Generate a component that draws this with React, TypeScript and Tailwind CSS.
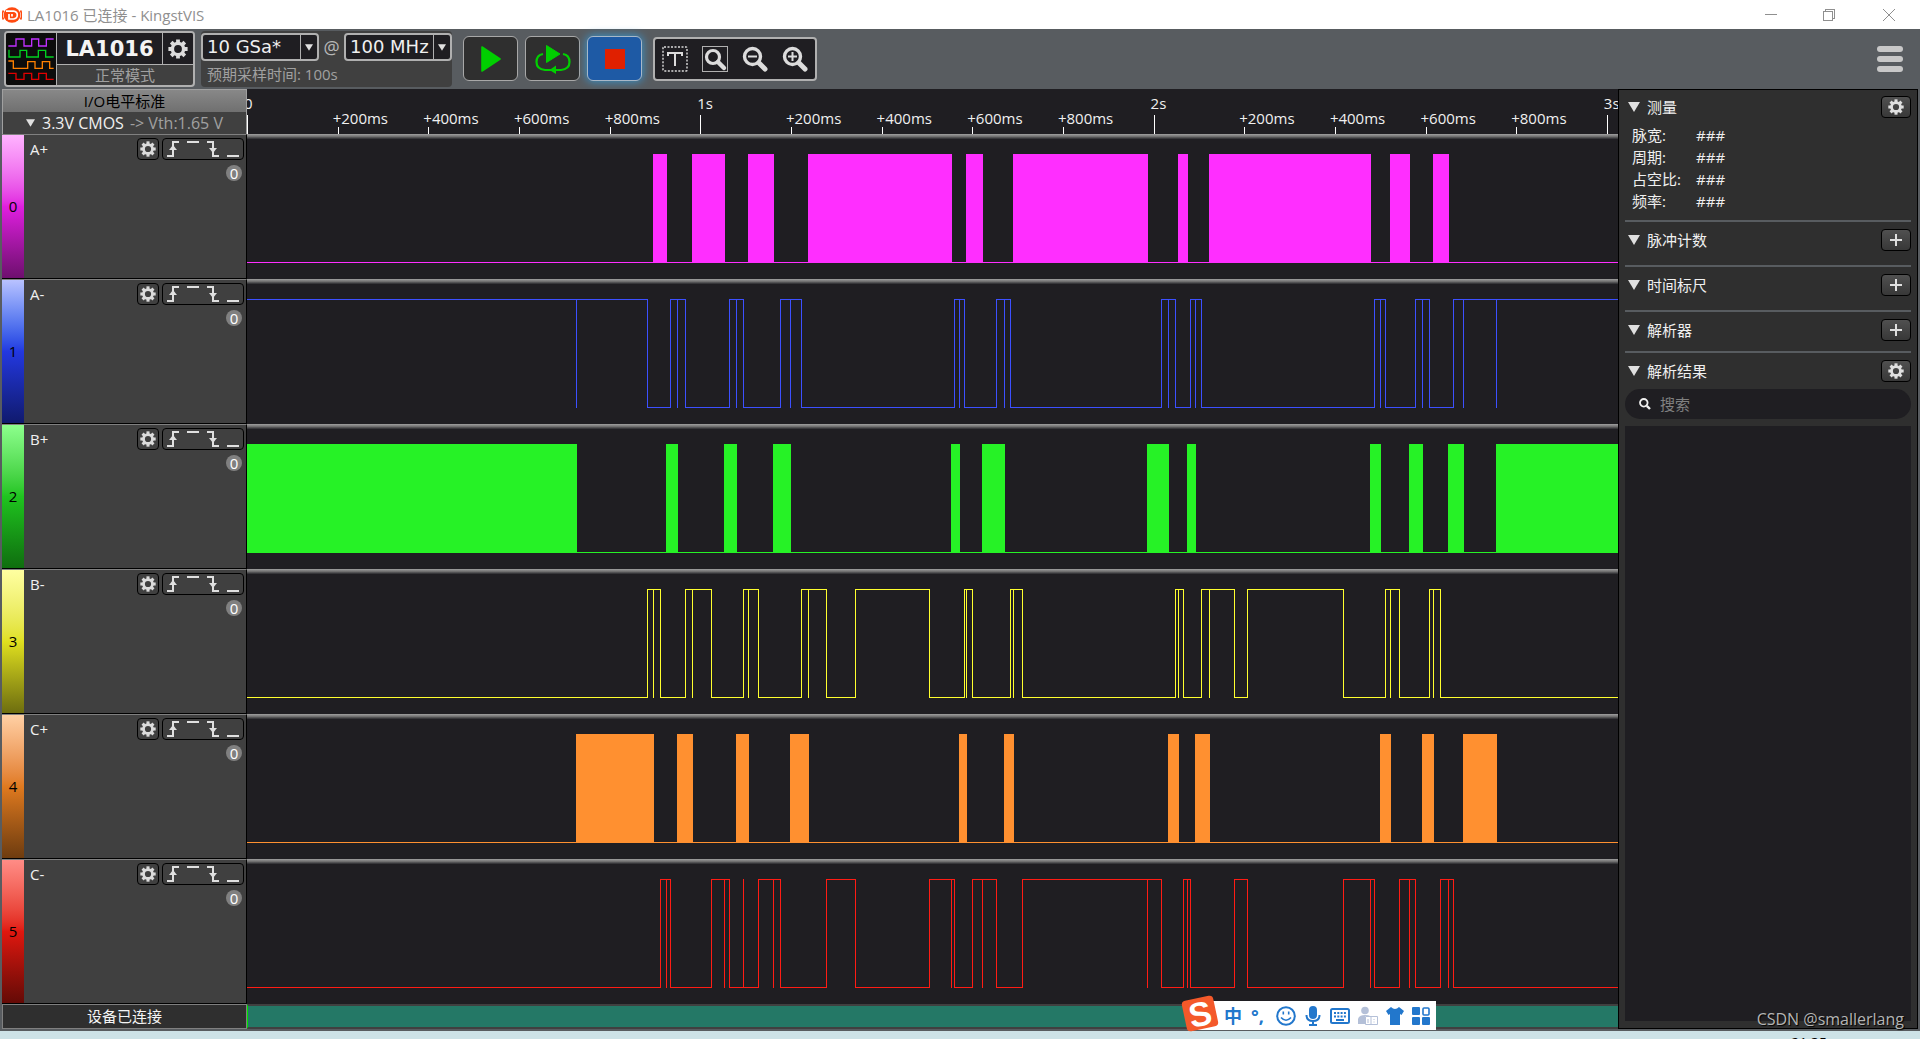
import React, { useState } from "react";

interface Channel {
  id: number;
  name: string;
  color: string;
  strip: string;
  // filled bursts, [start, end] in timeline units
  bursts?: [number, number][];
  // level changes and the narrow spikes between them
  startHigh?: boolean;
  edges?: number[];
  spikes?: number[];
}

const TIMELINE_WIDTH = 1371;
const HIGH = 15;
const LOW = 123;

const channels: Channel[] = [
  {
    id: 0,
    name: "A+",
    color: "#ff2eff",
    strip: "from-[#ffb3ff] via-[#e01fe0] to-[#6e0f6e]",
    bursts: [[406, 420], [445, 478], [501, 527], [561, 705], [719, 736], [766, 901], [931, 941], [962, 1124], [1143, 1163], [1186, 1202]],
  },
  {
    id: 1,
    name: "A-",
    color: "#3c50ff",
    strip: "from-[#b9c2ff] via-[#2338e0] to-[#101a6e]",
    startHigh: true,
    edges: [400, 423, 438, 482, 496, 533, 554, 707, 717, 749, 763, 914, 928, 943, 954, 1127, 1138, 1168, 1182, 1206],
    spikes: [329, 430, 489, 543, 712, 757, 921, 948, 1133, 1175, 1216, 1249],
  },
  {
    id: 2,
    name: "B+",
    color: "#26f226",
    strip: "from-[#8cff8c] via-[#1fc41f] to-[#0f6e0f]",
    bursts: [[0, 330], [419, 431], [477, 490], [526, 544], [704, 713], [735, 758], [900, 922], [940, 949], [1123, 1134], [1162, 1176], [1201, 1217], [1249, 1371]],
  },
  {
    id: 3,
    name: "B-",
    color: "#ffff2e",
    strip: "from-[#ffffa0] via-[#e0e01f] to-[#6e6e0f]",
    edges: [400, 413, 438, 464, 496, 511, 554, 579, 608, 682, 717, 725, 763, 775, 928, 936, 954, 987, 1000, 1096, 1138, 1152, 1182, 1193],
    spikes: [406, 445, 501, 561, 719, 766, 931, 962, 1143, 1186],
  },
  {
    id: 4,
    name: "C+",
    color: "#ff9030",
    strip: "from-[#ffd0a4] via-[#e07a1f] to-[#6e3c0f]",
    bursts: [[329, 407], [430, 446], [489, 502], [543, 562], [712, 720], [757, 767], [921, 932], [948, 963], [1133, 1144], [1175, 1187], [1216, 1250]],
  },
  {
    id: 5,
    name: "C-",
    color: "#ff1c14",
    strip: "from-[#ff8c86] via-[#e0170f] to-[#640a06]",
    edges: [413, 423, 464, 482, 511, 533, 579, 608, 682, 707, 725, 749, 775, 914, 936, 943, 987, 1000, 1096, 1127, 1152, 1168, 1193, 1206],
    spikes: [419, 477, 496, 526, 704, 735, 900, 940, 1123, 1162, 1201],
  },
];

const ticks = Array.from({ length: 16 }, (_, i) => ({
  major: i % 5 === 0,
  label: i % 5 === 0 ? (i === 0 ? "0" : `${i / 5}s`) : `+${(i % 5) * 200}ms`,
}));

const measurements = ["脉宽:", "周期:", "占空比:", "频率:"];

const GearIcon = ({ className }: { className: string }) => (
  <svg viewBox="0 0 20 20" className={className} fill="none" stroke="currentColor" aria-hidden="true">
    <circle cx="10" cy="10" r="5.6" strokeWidth="3.4" />
    {[0, 45, 90, 135, 180, 225, 270, 315].map((a) => (
      <path key={a} d="M10 4.2V0.4" strokeWidth="3.8" transform={`rotate(${a} 10 10)`} />
    ))}
  </svg>
);

const DownTriangle = ({ className }: { className: string }) => (
  <svg viewBox="0 0 12 10" className={className} fill="#e0e0e0" aria-hidden="true">
    <path d="M0 0H12L6 10Z" />
  </svg>
);

const Magnifier = ({ children }: { children?: React.ReactNode }) => (
  <g fill="none" stroke="#dcdcdc">
    <circle cx="10.5" cy="10.5" r="8" strokeWidth="3.4" />
    <path d="M17 17L23 23" strokeWidth="5" strokeLinecap="round" />
    {children}
  </g>
);

function TitleBar() {
  return (
    <header className="flex h-[29px] shrink-0 items-center bg-white pl-0.5 text-[#8f8f8f]">
      <svg viewBox="0 0 20 16" className="h-4 w-5" aria-hidden="true">
        <ellipse cx="10" cy="8" rx="8.4" ry="7.8" fill="#ff4a10" />
        <path d="M1.5 3.5Q-1 8 1.5 12.5M18.5 3.5Q21 8 18.5 12.5" stroke="#ff4a10" strokeWidth="1.6" fill="none" />
        <path d="M4 4.2H11.5Q15.3 4.6 15.3 8T11.5 12H7V7M10 7V9.600" stroke="#fff" strokeWidth="1.7" fill="none" />
      </svg>
      <h1 className="ml-[5px] text-[15px] leading-5">LA1016 已连接 - KingstVIS</h1>
      <div className="ml-auto flex h-full">
        <button aria-label="最小化" className="flex w-[58px] items-center justify-center">
          <svg viewBox="0 0 12 12" className="h-3 w-3" stroke="#8f8f8f" shapeRendering="crispEdges">
            <path d="M0 5.5H12" />
          </svg>
        </button>
        <button aria-label="还原" className="flex w-[58px] items-center justify-center">
          <svg viewBox="0 0 12 12" className="h-3 w-3" fill="none" stroke="#8f8f8f" shapeRendering="crispEdges">
            <path d="M0.5 2.5H9.5V11.5H0.5ZM2.5 2.5V0.5H11.5V9.5H9.5" />
          </svg>
        </button>
        <button aria-label="关闭" className="flex w-[62px] items-center justify-center">
          <svg viewBox="0 0 12 12" className="h-3 w-3" stroke="#8f8f8f">
            <path d="M0 0L12 12M12 0L0 12" />
          </svg>
        </button>
      </div>
    </header>
  );
}

function ToolbarSelect({ label, value, className }: { label: string; value: string; className: string }) {
  return (
    <div className={`relative h-7 rounded-sm border-2 border-[#b0b0b0] bg-[#1f1e22] ${className}`}>
      <select
        aria-label={label}
        defaultValue={value}
        className="block h-full w-full appearance-none pl-1 font-['DejaVu_Sans'] text-[18px] leading-6 text-[#f0f0f0] outline-none"
      >
        <option>{value}</option>
      </select>
      <span className="pointer-events-none absolute inset-y-0 right-0 flex w-[17px] items-center justify-center border-l border-[#b0b0b0]">
        <DownTriangle className="h-[7px] w-2" />
      </span>
    </div>
  );
}

function Toolbar() {
  return (
    <div className="flex h-[60px] shrink-0 items-center pr-[17px] pl-1">
      <div className="flex h-14 w-[191px] overflow-hidden rounded-sm border-2 border-[#b0b0b0] bg-[#404040]">
        <svg viewBox="18 100 150 156" className="h-full w-[50px] bg-[#0c0c0c]" fill="none" strokeWidth="4" aria-hidden="true">
          <path stroke="#c030ff" d="M25 139H48V118H72V139H95V118H116V139H139V118H161" />
          <path stroke="#00d020" d="M27 150V172H60V152H80V172H115V152H137V172H161" />
          <path stroke="#ff8000" d="M25 184H40V206H83V186H105V206H127V186H149V206H161" />
          <path stroke="#e00000" d="M25 221H48V239H72V221H95V239H116V221H139V239H161" />
        </svg>
        <div className="flex flex-1 flex-col border-l border-[#b0b0b0]">
          <div className="flex h-[33px] border-b border-[#b0b0b0] bg-[#1f1e22]">
            <strong className="flex flex-1 items-center justify-center font-['DejaVu_Sans'] text-[21px] leading-6 text-[#f4f4f4]">
              LA1016
            </strong>
            <button aria-label="设备设置" className="flex w-[31px] items-center justify-center border-l border-[#b0b0b0] text-[#dcdcdc]">
              <GearIcon className="h-5 w-5" />
            </button>
          </div>
          <span className="text-center text-[15px] leading-5 text-[#a0a0a0]">正常模式</span>
        </div>
      </div>

      <div className="ml-1.5 h-14 w-[251px] rounded-sm bg-[#404040] pt-0.5">
        <div className="flex items-center justify-between">
          <ToolbarSelect label="采样深度" value="10 GSa*" className="w-[118px]" />
          <span className="text-[18px] leading-6 text-[#b8b8b8]">@</span>
          <ToolbarSelect label="采样率" value="100 MHz" className="w-[108px]" />
        </div>
        <p className="pt-[3px] pl-1.5 text-[15px] leading-5 text-[#a0a0a0]">预期采样时间: 100s</p>
      </div>

      <div className="mb-px ml-[11px] flex gap-[7px]">
        <button aria-label="开始采样" className="flex h-[45px] w-[55px] items-center justify-center rounded-md border border-[#a8a8a8] bg-[#2f2f2f]">
          <svg viewBox="0 0 22 26" className="ml-px h-[26px] w-[22px]">
            <path d="M2 1L20 13L2 25Z" fill="#00d000" stroke="#00d000" strokeWidth="1.6" strokeLinejoin="round" />
          </svg>
        </button>
        <button aria-label="循环采样" className="flex h-[45px] w-[55px] items-center justify-center rounded-md border border-[#a8a8a8] bg-[#2f2f2f]">
          <svg viewBox="0 0 36 30" className="h-[30px] w-9" fill="none">
            <path d="M8 10Q1.500 11 1.500 18T10 26H26Q34.500 25 34.500 18T28 10" stroke="#00d000" strokeWidth="2.2" />
            <path d="M11.5 1.5L25 10L11.5 18.5Z" fill="#00d000" stroke="#00d000" strokeLinejoin="round" />
            <path d="M14.500 26L21 21.500V30Z" fill="#00d000" />
          </svg>
        </button>
        <button aria-label="停止" className="flex h-[45px] w-[55px] items-center justify-center rounded-md border border-[#a8b8c8] bg-[#1e5aa5] shadow-[0_0_8px_1px_#3a8fc4]">
          <svg viewBox="0 0 20 20" className="h-5 w-5">
            <rect width="20" height="20" fill="#e02000" />
          </svg>
        </button>
      </div>

      <div className="ml-[11px] flex h-11 w-[164px] items-center justify-around rounded-sm border-2 border-[#b0b0b0] bg-[#1f1e22]">
        <button aria-label="时间标签">
          <svg viewBox="0 0 26 26" className="h-[26px] w-[26px]" fill="none" stroke="#dcdcdc">
            <rect x="1" y="1" width="24" height="24" rx="1" strokeWidth="1.4" strokeDasharray="2 1.500" />
            <path d="M6 7H20M13 7V20M6 6V10M20 6V10" strokeWidth="2" />
          </svg>
        </button>
        <button aria-label="适合窗口">
          <svg viewBox="0 0 26 26" className="h-[26px] w-[26px]" fill="none">
            <rect x="0.500" y="0.500" width="25" height="25" stroke="#b0b0b0" />
            <circle cx="11" cy="11" r="6.500" stroke="#dcdcdc" strokeWidth="3.200" />
            <path d="M16 16L22 22" stroke="#dcdcdc" strokeWidth="4.500" strokeLinecap="round" />
          </svg>
        </button>
        <button aria-label="缩小">
          <svg viewBox="0 0 26 26" className="h-[26px] w-[26px]">
            <Magnifier>
              <path d="M6 10.500H15" strokeWidth="2" />
            </Magnifier>
          </svg>
        </button>
        <button aria-label="放大">
          <svg viewBox="0 0 26 26" className="h-[26px] w-[26px]">
            <Magnifier>
              <path d="M6 10.500H15M10.500 6V15" strokeWidth="2" />
            </Magnifier>
          </svg>
        </button>
      </div>

      <button aria-label="菜单" className="ml-auto">
        <svg viewBox="0 0 26 26" className="h-[26px] w-[26px]" fill="#c8c8c8">
          <rect width="26" height="6" rx="3" />
          <rect y="10" width="26" height="6" rx="3" />
          <rect y="20" width="26" height="6" rx="3" />
        </svg>
      </button>
    </div>
  );
}

function Ruler() {
  return (
    <div className="flex min-w-0 flex-1 overflow-hidden">
      {ticks.map((tick, i) => (
        <div key={i} className="flex w-[6.613%] shrink-0 flex-col justify-end text-[15px] leading-4 whitespace-nowrap text-[#f0f0f0]">
          {tick.major ? (
            <>
              <span className="-ml-[3px] pb-1">{tick.label}</span>
              <span className="h-[19px] w-px bg-white" />
            </>
          ) : (
            <>
              <span className="-ml-[5px] pb-px">{tick.label}</span>
              <span className="h-[7px] w-px bg-white" />
            </>
          )}
        </div>
      ))}
    </div>
  );
}

const triggers = [
  { label: "上升沿", d: "M0 15H6V1H12", arrow: "M2 9L6 4L10 9Z" },
  { label: "高电平", d: "M0 1H12", arrow: "" },
  { label: "下降沿", d: "M0 1H6V15H12", arrow: "M2 7L6 12L10 7Z" },
  { label: "低电平", d: "M0 15H12", arrow: "" },
];

function ChannelHeader({ channel }: { channel: Channel }) {
  return (
    <div className="flex w-[245px] shrink-0 border-t border-r border-b border-t-[#808080] border-r-black border-b-black bg-[#404040]">
      <div className={`flex w-[22px] items-center justify-center bg-linear-to-b pb-0.5 text-[15px] leading-5 text-black ${channel.strip}`}>
        {channel.id}
      </div>
      <div className="flex flex-1 flex-col items-end pt-[3px] pr-0.5 pl-1.5">
        <div className="flex w-full gap-[3px]">
          <span className="flex-1 text-[15px] leading-[22px] text-[#f0f0f0]">{channel.name}</span>
          <button
            aria-label={`${channel.name} 设置`}
            className="flex h-[22px] w-[22px] items-center justify-center rounded-sm border border-black text-[#dcdcdc]"
          >
            <GearIcon className="h-4 w-4" />
          </button>
          <div className="flex h-[22px] w-[82px] rounded-sm border border-black">
            {triggers.map((t) => (
              <button key={t.label} aria-label={`${channel.name} ${t.label}`} className="flex w-5 items-center justify-center">
                <svg viewBox="0 0 12 16" className="h-4 w-3" fill="none" stroke="#e0e0e0" strokeWidth="2">
                  <path d={t.d} />
                  {t.arrow && <path d={t.arrow} fill="#e0e0e0" stroke="none" />}
                </svg>
              </button>
            ))}
          </div>
        </div>
        <span className="mt-[5px] mr-0.5 flex h-4 w-4 items-center justify-center rounded-full bg-[#808080] text-[15px] leading-4 text-white">
          0
        </span>
      </div>
    </div>
  );
}

// Every line is a one unit thick box so that it stays sharp when stretched
const hLine = (x1: number, x2: number, y: number) => `M${x1} ${y}H${x2}V${y + 1}H${x1}Z`;
const vLine = (x: number) => `M${x} ${HIGH}H${x + 1}V${LOW + 1}H${x}Z`;

function wavePath(channel: Channel) {
  let level = channel.startHigh ? HIGH : LOW;
  let last = 0;
  let d = "";
  (channel.edges ?? []).forEach((x) => {
    d += hLine(last, x + 1, level) + vLine(x);
    level = level === HIGH ? LOW : HIGH;
    last = x;
  });
  d += hLine(last, TIMELINE_WIDTH, level);
  (channel.spikes ?? []).forEach((x) => {
    d += vLine(x);
  });
  return d;
}

function Waveform({ channel }: { channel: Channel }) {
  return (
    <div className="flex min-w-0 flex-1 flex-col">
      <div className="h-[5px] shrink-0 bg-linear-to-b from-[#a0a0a0] via-[#707070] to-[#2a2a2e]" />
      <svg
        viewBox={`0 0 ${TIMELINE_WIDTH} 140`}
        preserveAspectRatio="none"
        shapeRendering="crispEdges"
        className="block min-h-0 w-full flex-1"
        fill={channel.color}
        role="img"
        aria-label={channel.name}
      >
        {channel.bursts?.map(([start, end]) => (
          <rect key={start} x={start} y={HIGH} width={end - start} height={LOW - HIGH + 1} />
        ))}
        <path d={wavePath(channel)} />
      </svg>
    </div>
  );
}

function InputMethodBar() {
  return (
    <div className="absolute -top-[5px] right-[182px] flex h-[29px] items-center bg-white pl-9 text-[#2277cc]">
      <span className="absolute -top-[3px] -left-1 flex h-[31px] w-8 -rotate-12 items-center justify-center rounded-sm bg-[#f4592a] font-['Liberation_Sans'] text-[34px] leading-8 font-bold text-white">
        S
      </span>
      <span className="w-[27px] text-lg leading-6 font-bold">中</span>
      <span className="w-[25px] text-lg leading-6 font-bold">°,</span>
      <svg viewBox="0 0 20 20" className="mr-[9px] h-5 w-5" fill="none" stroke="currentColor" strokeWidth="2">
        <circle cx="10" cy="10" r="8.800" />
        <path d="M7.300 5.500V8.500M12.700 5.500V8.500M5 11.500Q10 17 15 11.500" strokeWidth="1.600" />
      </svg>
      <svg viewBox="0 0 16 20" className="mr-[9px] h-5 w-4" fill="none" stroke="currentColor" strokeWidth="2">
        <rect x="5" y="1" width="6" height="11" rx="3" fill="currentColor" />
        <path d="M1.500 9Q1.500 15 8 15T14.500 9M8 15V19M4 19H12" />
      </svg>
      <svg viewBox="0 0 20 16" className="mr-2 h-4 w-5" fill="none" stroke="currentColor" strokeWidth="2">
        <rect x="1" y="1" width="18" height="14" rx="1.500" />
        <path d="M4 5H16M4 8.500H16" strokeDasharray="2 1.300" />
        <path d="M6 12H14" />
      </svg>
      <svg viewBox="0 0 20 20" className="mr-2 h-5 w-5" fill="#b4c0d8">
        <circle cx="7" cy="4.500" r="3.800" />
        <path d="M0 18V13Q1 9 7 9Q11 9 12 10H7V18Z" />
        <path d="M7.500 10.500H19.500V18.500H7.500ZM10 13V17M13 10.500V18M16 13V14M16 15.500V16.500" fill="none" stroke="#b4c0d8" />
      </svg>
      <svg viewBox="0 0 18 18" className="mr-2 h-[18px] w-[18px]" fill="currentColor">
        <path d="M5 0Q9 4 13 0L18 4L15.500 8L14 7V18H4V7L2.500 8L0 4Z" />
      </svg>
      <svg viewBox="0 0 18 18" className="mr-1.5 h-[18px] w-[18px]" fill="currentColor">
        <rect width="8" height="8" rx="1" />
        <rect x="11" y="1" width="6" height="7" rx="1" fill="none" stroke="currentColor" strokeWidth="1.600" />
        <rect y="10" width="8" height="8" rx="1" />
        <rect x="10" y="10" width="8" height="8" rx="1" />
      </svg>
    </div>
  );
}

function StatusBar() {
  return (
    <footer className="flex h-[25px] shrink-0">
      <div className="flex w-[245px] items-center justify-center border border-[#808080] bg-[#2f2f2f] pb-0.5 text-[15px] leading-5 text-[#f4f4f4]">
        设备已连接
      </div>
      <div className="relative flex-1 border-y-2 border-l border-y-[#404040] border-l-[#00e000] bg-[#247866]">
        <InputMethodBar />
      </div>
    </footer>
  );
}

function PanelSection({
  title,
  action,
  className,
  children,
}: {
  title: string;
  action: "gear" | "add";
  className: string;
  children?: React.ReactNode;
}) {
  const [open, setOpen] = useState(true);

  return (
    <section className={className}>
      <div className="flex items-center justify-between">
        <button
          aria-expanded={open}
          onClick={() => setOpen(!open)}
          className="flex items-center gap-[7px] pl-[3px] text-[15px] leading-[22px] text-[#f0f0f0]"
        >
          <DownTriangle className="h-2.5 w-3" />
          {title}
        </button>
        <button
          aria-label={`${title} ${action === "gear" ? "设置" : "添加"}`}
          className="flex h-[22px] w-[30px] items-center justify-center rounded-sm border border-black bg-linear-to-b from-[#505050] to-[#383838] text-[#e0e0e0]"
        >
          {action === "gear" ? (
            <GearIcon className="h-4 w-4" />
          ) : (
            <svg viewBox="0 0 14 14" className="h-3.5 w-3.5" stroke="currentColor" strokeWidth="2">
              <path d="M1 7H13M7 1V13" />
            </svg>
          )}
        </button>
      </div>
      {open && children}
    </section>
  );
}

function SidePanel() {
  return (
    <aside className="relative flex w-[300px] shrink-0 flex-col border border-black bg-[#2f2f2f] px-1.5 pt-1.5 pb-[7px]">
      <PanelSection title="测量" action="gear" className="h-[124px]">
        <dl className="grid grid-cols-[64px_1fr] pt-1.5 pl-[7px] text-[15px] leading-[22px] text-[#f0f0f0]">
          {measurements.map((m) => (
            <React.Fragment key={m}>
              <dt>{m}</dt>
              <dd>###</dd>
            </React.Fragment>
          ))}
        </dl>
      </PanelSection>
      <PanelSection title="脉冲计数" action="add" className="h-[45px] border-t-2 border-[#585c60] pt-[7px]" />
      <PanelSection title="时间标尺" action="add" className="h-[45px] border-t-2 border-[#585c60] pt-[7px]" />
      <PanelSection title="解析器" action="add" className="h-[41px] border-t-2 border-[#585c60] pt-[7px]" />
      <PanelSection title="解析结果" action="gear" className="flex flex-1 flex-col border-t-2 border-[#585c60] pt-[7px]">
        <label className="mt-[7px] flex h-[30px] items-center gap-[9px] rounded-full bg-[#1f1e22] pl-3.5">
          <svg viewBox="0 0 12 12" className="h-3 w-3" fill="none" stroke="#f0f0f0" aria-hidden="true">
            <circle cx="4.800" cy="4.800" r="3.800" strokeWidth="1.800" />
            <path d="M7.800 7.800L11 11" strokeWidth="2.400" />
          </svg>
          <input
            type="text"
            aria-label="搜索"
            placeholder="搜索"
            className="min-w-0 flex-1 bg-transparent text-[15px] leading-5 text-white outline-none placeholder:text-[#808080]"
          />
        </label>
        <div className="mt-[7px] flex-1 bg-[#1f1e22]" />
      </PanelSection>
      <span className="absolute right-[13px] -bottom-px text-base leading-5 text-[#b4b4b4] [text-shadow:1px_1px_1px_#000]">
        CSDN @smallerlang
      </span>
    </aside>
  );
}

export default function App() {
  return (
    <div className="flex min-h-screen flex-col bg-[#585c60] font-['Open_Sans','Noto_Sans_CJK_SC',sans-serif]">
      <TitleBar />
      <Toolbar />
      <main className="flex flex-1 px-0.5 pb-0.5">
        <div className="flex min-w-0 flex-1 flex-col bg-[#1f1e22]">
          <div className="flex h-[45px] shrink-0">
            <div className="flex w-[245px] shrink-0 flex-col border border-b-0 border-[#a0a0a0] bg-[#404040]">
              <h2 className="bg-linear-to-b from-[#888888] to-[#707070] text-center text-[15px] leading-[22px] text-black">I/O电平标准</h2>
              <button className="flex h-[22px] items-center pl-[23px] text-base leading-5 text-[#f0f0f0]">
                <DownTriangle className="mr-[7px] h-2 w-[9px]" />
                3.3V CMOS
                <span className="ml-1.5 text-[#a0a0a0]">-&gt; Vth:1.65 V</span>
              </button>
            </div>
            <Ruler />
          </div>
          <div className="flex flex-1 flex-col">
            {channels.map((channel) => (
              <div key={channel.id} className="flex min-h-36 flex-1">
                <ChannelHeader channel={channel} />
                <Waveform channel={channel} />
              </div>
            ))}
          </div>
          <StatusBar />
        </div>
        <SidePanel />
      </main>
      <div className="flex h-[9px] shrink-0 justify-end overflow-hidden bg-[#cde2e7] pr-[93px] text-sm text-black">
        <time className="leading-6">21:35</time>
      </div>
    </div>
  );
}
